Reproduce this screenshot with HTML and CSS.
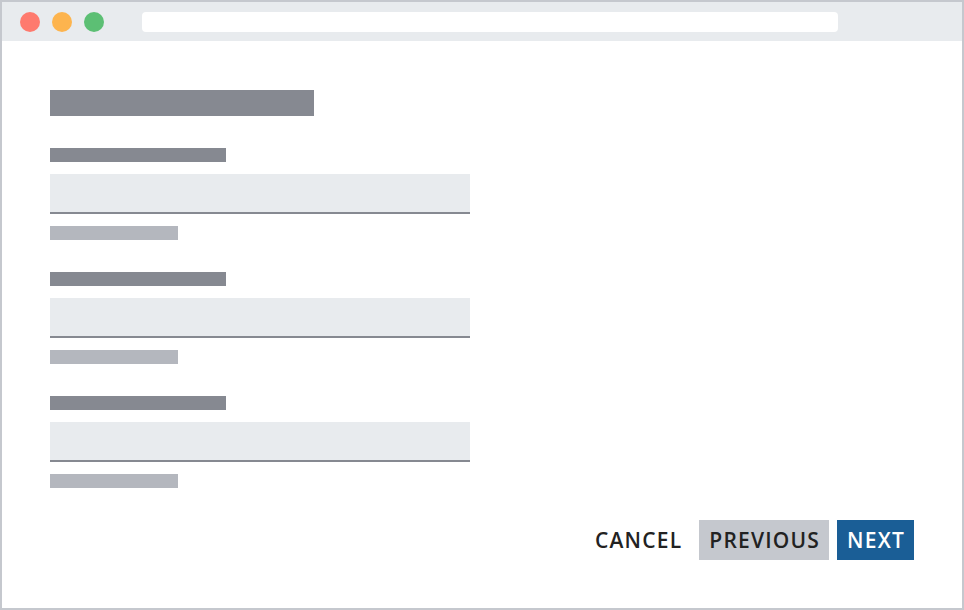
FILE: index.html
```html
<!DOCTYPE html>
<html lang="en">
<head>
    <meta charset="UTF-8">
    <title>Form wizard</title>
    <link rel="stylesheet" href="styles.css">
</head>
<body>
    <div class="window">
        <div class="topbar">
            <span class="dot red"></span>
            <span class="dot yellow"></span>
            <span class="dot green"></span>
            <div class="urlbar"></div>
        </div>

        <div class="content">
            <div class="title-bar"></div>

            <div class="fields">
                <div class="field">
                    <div class="label"></div>
                    <div class="input"></div>
                    <div class="hint"></div>
                </div>
                <div class="field">
                    <div class="label"></div>
                    <div class="input"></div>
                    <div class="hint"></div>
                </div>
                <div class="field">
                    <div class="label"></div>
                    <div class="input"></div>
                    <div class="hint"></div>
                </div>
            </div>

            <div class="actions">
                <button class="btn btn-cancel">Cancel</button>
                <button class="btn btn-prev">Previous</button>
                <button class="btn btn-next">Next</button>
            </div>
        </div>
    </div>
</body>
</html>
```

FILE: styles.css
```css
html, body {
    margin: 0;
    padding: 0;
}

body {
    width: 964px;
    height: 610px;
    font-family: "Open Sans", "Liberation Sans", sans-serif;
    background-color: #fff;
}

.window {
    box-sizing: border-box;
    width: 964px;
    height: 610px;
    border: 2px solid #c5c8ce;
    display: flex;
    flex-direction: column;
}

/* browser top bar */
.topbar {
    height: 39px;
    flex: none;
    background-color: #e8ebee;
    display: flex;
    align-items: flex-start;
    padding: 10px 0 0 18px;
    box-sizing: border-box;
    gap: 12px;
}

.dot {
    width: 20px;
    height: 20px;
    border-radius: 50%;
}
.red { background-color: #fe7a6e; }
.yellow { background-color: #fdb44e; }
.green { background-color: #5cbf74; }

.urlbar {
    margin-left: 26px;
    width: 696px;
    height: 20px;
    background-color: #fff;
    border-radius: 4px;
}

/* form area */
.content {
    flex: 1;
    display: flex;
    flex-direction: column;
    padding: 49px 48px 48px 48px;
}

.title-bar {
    width: 264px;
    height: 26px;
    background-color: #868991;
}

.fields {
    margin-top: 32px;
    display: flex;
    flex-direction: column;
    gap: 32px;
}

.field {
    display: flex;
    flex-direction: column;
    gap: 12px;
}

.label {
    width: 176px;
    height: 14px;
    background-color: #868991;
}

.input {
    width: 420px;
    height: 38px;
    background-color: #e8ebee;
    border-bottom: 2px solid #868991;
}

.hint {
    width: 128px;
    height: 14px;
    background-color: #b4b7be;
}

.actions {
    margin-top: auto;
    display: flex;
    justify-content: flex-end;
    gap: 8px;
}

.btn {
    height: 40px;
    border: none;
    margin: 0;
    padding: 0 9px 0 10px;
    font-family: "Open Sans", "Liberation Sans", sans-serif;
    font-size: 21px;
    font-weight: 600;
    letter-spacing: 1.2px;
    text-transform: uppercase;
    color: #222;
    background: none;
}

.btn-prev {
    background-color: #c5c8ce;
}

.btn-next {
    background-color: #1a5e96;
    color: #fff;
}
```
